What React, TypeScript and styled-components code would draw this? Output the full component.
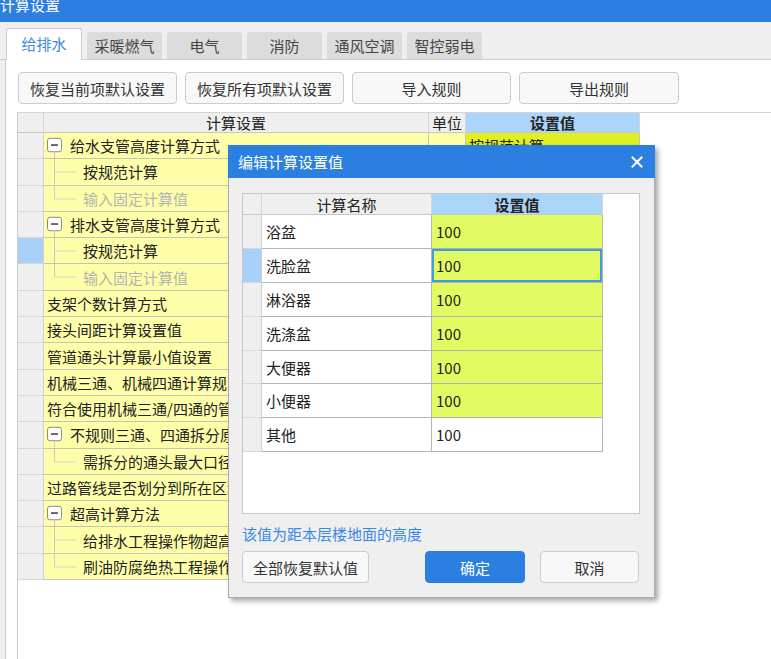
import React from "react";
import styled, { createGlobalStyle, css } from "styled-components";

const GlobalStyle = createGlobalStyle`
  html, body { margin: 0; padding: 0; }
  body {
    font-family: "Noto Sans CJK SC", "Microsoft YaHei", "Noto Sans", sans-serif;
    background: #f0f0f0;
    overflow: hidden;
  }
  * { box-sizing: border-box; }
`;

const BLUE = "#2b7fe0";

const Window = styled.div`
  position: relative;
  width: 771px;
  height: 659px;
  overflow: hidden;
  background: #efefef;
  display: flex;
  flex-direction: column;
`;

const TitleBar = styled.div`
  height: 22px;
  flex: none;
  background: ${BLUE};
  color: #fff;
  font-size: 15px;
  line-height: 16px;
  overflow: hidden;
  padding-left: 0;
  span { display: block; margin-top: -3px; }
`;

const TabStrip = styled.div`
  height: 38px;
  flex: none;
  display: flex;
  align-items: flex-end;
  gap: 5px;
  padding-left: 6px;
  border-bottom: 1px solid #c8ccd4;
`;

const Tab = styled.div<{ $active?: boolean }>`
  width: 75px;
  height: 27px;
  background: #dcdcdc;
  border-radius: 3px 3px 0 0;
  color: #444;
  font-size: 15px;
  display: flex;
  align-items: center;
  justify-content: center;
  ${(p) =>
    p.$active &&
    css`
      width: 76px;
      height: 32px;
      margin-bottom: -1px;
      background: #fff;
      border: 1px solid #c8ccd4;
      border-bottom: none;
      color: #3a88e8;
      padding-bottom: 2px;
    `}
`;

const Panel = styled.div`
  flex: 1;
  margin-left: 5px;
  background: #fff;
  border-left: 1px solid #c8ccd4;
  padding: 12px 0 0 11px;
  display: flex;
  flex-direction: column;
  min-height: 0;
`;

const ButtonRow = styled.div`
  display: flex;
  gap: 8px;
  margin-left: 1px;
`;

const Button = styled.button<{ $w: number; $primary?: boolean }>`
  width: ${(p) => p.$w}px;
  height: 32px;
  border: 1px solid #c8ccd8;
  border-radius: 4px;
  background: #f8f8f8;
  color: #333;
  font-family: inherit;
  font-size: 15px;
  padding: 0;
  ${(p) =>
    p.$primary &&
    css`
      background: ${BLUE};
      border-color: ${BLUE};
      color: #fff;
    `}
`;

const Grid = styled.div`
  flex: 1;
  margin-top: 8px;
  border-top: 1px solid #d4d4d4;
  border-left: 1px solid #c8ccd4;
  display: flex;
  flex-direction: column;
`;

const Row = styled.div<{ $h: number }>`
  display: flex;
  height: ${(p) => p.$h}px;
  flex: none;
`;

const HeadCell = styled.div<{ $w: number; $blue?: boolean; $bold?: boolean }>`
  width: ${(p) => p.$w}px;
  flex: none;
  height: 100%;
  background: ${(p) => (p.$blue ? "#aad4fa" : "#efefef")};
  border-right: 1px solid #d6d6d6;
  border-bottom: 1px solid #c8c8c8;
  font-size: 15px;
  color: #222;
  font-weight: ${(p) => (p.$bold ? 700 : 400)};
  display: flex;
  align-items: center;
  justify-content: center;
  line-height: 1;
`;

const RowHead = styled.div<{ $w: number; $sel?: boolean }>`
  width: ${(p) => p.$w}px;
  flex: none;
  height: 100%;
  background: ${(p) => (p.$sel ? "#a8d0f8" : "#efefef")};
  border-right: 1px solid #d0d0d0;
  border-bottom: 1px solid #d8d8d8;
`;

const YCell = styled.div<{ $w: number; $bg?: string; $pad?: number }>`
  width: ${(p) => p.$w}px;
  flex: none;
  height: 100%;
  background: ${(p) => p.$bg || "#ffffaa"};
  border-right: 1px solid #c4c4b8;
  border-bottom: 1px solid #c4c4b8;
  display: flex;
  align-items: center;
  padding-left: ${(p) => p.$pad ?? 3}px;
  overflow: hidden;
  white-space: nowrap;
  font-size: 15px;
  color: #222;
`;

const Label = styled.span<{ $dim?: boolean; $ml?: number }>`
  color: ${(p) => (p.$dim ? "#b4b4b4" : "#222")};
  margin-left: ${(p) => p.$ml ?? 0}px;
  white-space: nowrap;
`;

const ExpandIcon = ({ hasChildren = true }: { hasChildren?: boolean }) => (
  <svg width="16" height="100%" viewBox="0 0 16 26.3" preserveAspectRatio="none" style={{ flex: "none", overflow: "visible" }}>
    <rect x="0.5" y="5.5" width="14" height="14" rx="2.5" fill="#fff" stroke="#8a8a8a" />
    <line x1="4" y1="12.5" x2="11" y2="12.5" stroke="#222" strokeWidth="1.4" />
    {hasChildren && <line x1="7.5" y1="19.5" x2="7.5" y2="26.3" stroke="#c8c8c8" />}
  </svg>
);

const Connector = ({ last }: { last?: boolean }) => (
  <svg width="36" height="100%" viewBox="0 0 36 26.3" preserveAspectRatio="none" style={{ flex: "none" }}>
    <line x1="10.5" y1="0" x2="10.5" y2={last ? 13.5 : 26.3} stroke="#c8c8c8" />
    <line x1="10.5" y1="13.5" x2="32" y2="13.5" stroke="#d4d4d4" />
  </svg>
);

type TreeRow = {
  kind: "parent" | "child" | "plain";
  text: string;
  value?: string;
  last?: boolean;
  dim?: boolean;
  sel?: boolean;
};

const rows: TreeRow[] = [
  { kind: "parent", text: "给水支管高度计算方式", value: "按规范计算" },
  { kind: "child", text: "按规范计算" },
  { kind: "child", text: "输入固定计算值", dim: true, last: true },
  { kind: "parent", text: "排水支管高度计算方式", value: "按规范计算" },
  { kind: "child", text: "按规范计算", sel: true },
  { kind: "child", text: "输入固定计算值", dim: true, last: true },
  { kind: "plain", text: "支架个数计算方式", value: "按规范计算" },
  { kind: "plain", text: "接头间距计算设置值", value: "按规范计算" },
  { kind: "plain", text: "管道通头计算最小值设置", value: "按规范计算" },
  { kind: "plain", text: "机械三通、机械四通计算规则", value: "按规范计算" },
  { kind: "plain", text: "符合使用机械三通/四通的管径范围", value: "按规范计算" },
  { kind: "parent", text: "不规则三通、四通拆分原则", value: "按规范计算" },
  { kind: "child", text: "需拆分的通头最大口径", last: true, value: "按规范计算" },
  { kind: "plain", text: "过路管线是否划分到所在区域", value: "是" },
  { kind: "parent", text: "超高计算方法" },
  { kind: "child", text: "给排水工程操作物超高起始值", value: "3.6" },
  { kind: "child", text: "刷油防腐绝热工程操作物超高起始值", last: true, value: "6" },
];

const COLS = { head: 26, name: 385, unit: 37, value: 174 };
const RH = 26.3;

const Dialog = styled.div`
  position: absolute;
  left: 228px;
  top: 145px;
  width: 427px;
  height: 453px;
  background: #efefef;
  border: 1px solid #a8acb4;
  border-top: none;
  box-shadow: 3px 3px 5px rgba(0, 0, 0, 0.35);
  display: flex;
  flex-direction: column;
`;

const DialogTitle = styled.div`
  height: 33px;
  flex: none;
  background: ${BLUE};
  margin: 0 -1px;
  color: #fff;
  font-size: 15px;
  display: flex;
  align-items: center;
  justify-content: space-between;
  padding: 0 12px 0 10px;
`;

const DialogBody = styled.div`
  flex: 1;
  padding: 15px 14px 0 13px;
  display: flex;
  flex-direction: column;
`;

const InnerGrid = styled.div`
  height: 321px;
  flex: none;
  background: #fff;
  border: 1px solid #c4c8cc;
  display: flex;
  flex-direction: column;
`;

const DCell = styled.div<{ $w: number; $lime?: boolean; $focus?: boolean }>`
  width: ${(p) => p.$w}px;
  flex: none;
  height: 100%;
  background: ${(p) => (p.$lime ? "#e2fb62" : "#fff")};
  border-right: 1px solid #b4b4b4;
  border-bottom: 1px solid #b4b4b4;
  display: flex;
  align-items: center;
  padding-left: 4px;
  font-size: 15px;
  color: #222;
  ${(p) =>
    p.$focus &&
    css`
      box-shadow: inset 0 0 0 2px #3aa2d8;
    `}
`;

const Hint = styled.div`
  margin-top: 10px;
  font-size: 15px;
  line-height: 20px;
  color: #3a88e8;
`;

const DialogButtons = styled.div`
  margin-top: 7px;
  display: flex;
  align-items: center;
  padding-right: 1px;
`;

const Spacer = styled.div`
  flex: 1;
`;

const ButtonGap = styled.div`
  width: 15px;
`;

const dialogRows = [
  { name: "浴盆", lime: true },
  { name: "洗脸盆", lime: true, sel: true },
  { name: "淋浴器", lime: true },
  { name: "洗涤盆", lime: true },
  { name: "大便器", lime: true },
  { name: "小便器", lime: true },
  { name: "其他", lime: false },
];

const DCOLS = { head: 19, name: 170, value: 171 };
const DRH = 33.9;

const CloseIcon = () => (
  <svg width="12" height="12" viewBox="0 0 12 12">
    <path d="M1.5 1.5 L10.5 10.5 M10.5 1.5 L1.5 10.5" stroke="#fff" strokeWidth="2" strokeLinecap="square" />
  </svg>
);

export default function App() {
  return (
    <>
      <GlobalStyle />
      <Window>
        <TitleBar>
          <span>计算设置</span>
        </TitleBar>
        <TabStrip>
          <Tab $active>给排水</Tab>
          <Tab>采暖燃气</Tab>
          <Tab>电气</Tab>
          <Tab>消防</Tab>
          <Tab>通风空调</Tab>
          <Tab>智控弱电</Tab>
        </TabStrip>
        <Panel>
          <ButtonRow>
            <Button $w={159}>恢复当前项默认设置</Button>
            <Button $w={159}>恢复所有项默认设置</Button>
            <Button $w={159}>导入规则</Button>
            <Button $w={160}>导出规则</Button>
          </ButtonRow>
          <Grid>
            <Row $h={20}>
              <HeadCell $w={COLS.head} />
              <HeadCell $w={COLS.name}>计算设置</HeadCell>
              <HeadCell $w={COLS.unit}>单位</HeadCell>
              <HeadCell $w={COLS.value} $blue $bold>
                设置值
              </HeadCell>
            </Row>
            {rows.map((r, i) => (
              <Row key={i} $h={RH}>
                <RowHead $w={COLS.head} $sel={r.sel} />
                <YCell $w={COLS.name} $pad={r.kind === "child" ? 0 : 3}>
                  {r.kind === "parent" && (
                    <>
                      <ExpandIcon />
                      <Label $ml={7}>{r.text}</Label>
                    </>
                  )}
                  {r.kind === "child" && (
                    <>
                      <Connector last={r.last} />
                      <Label $ml={3} $dim={r.dim}>
                        {r.text}
                      </Label>
                    </>
                  )}
                  {r.kind === "plain" && <Label>{r.text}</Label>}
                </YCell>
                <YCell $w={COLS.unit} />
                <YCell $w={COLS.value} $bg={r.value ? "#e0ef22" : "#ffffaa"}>
                  {r.value}
                </YCell>
              </Row>
            ))}
          </Grid>
        </Panel>

        <Dialog>
          <DialogTitle>
            <span>编辑计算设置值</span>
            <CloseIcon />
          </DialogTitle>
          <DialogBody>
            <InnerGrid>
              <Row $h={21}>
                <HeadCell $w={DCOLS.head} />
                <HeadCell $w={DCOLS.name}>计算名称</HeadCell>
                <HeadCell $w={DCOLS.value} $blue $bold>
                  设置值
                </HeadCell>
              </Row>
              {dialogRows.map((r, i) => (
                <Row key={i} $h={DRH}>
                  <RowHead $w={DCOLS.head} $sel={r.sel} />
                  <DCell $w={DCOLS.name}>{r.name}</DCell>
                  <DCell $w={DCOLS.value} $lime={r.lime} $focus={r.sel}>
                    100
                  </DCell>
                </Row>
              ))}
            </InnerGrid>
            <Hint>该值为距本层楼地面的高度</Hint>
            <DialogButtons>
              <Button $w={127}>全部恢复默认值</Button>
              <Spacer />
              <Button $w={100} $primary>
                确定
              </Button>
              <ButtonGap />
              <Button $w={99}>取消</Button>
            </DialogButtons>
          </DialogBody>
        </Dialog>
      </Window>
    </>
  );
}
